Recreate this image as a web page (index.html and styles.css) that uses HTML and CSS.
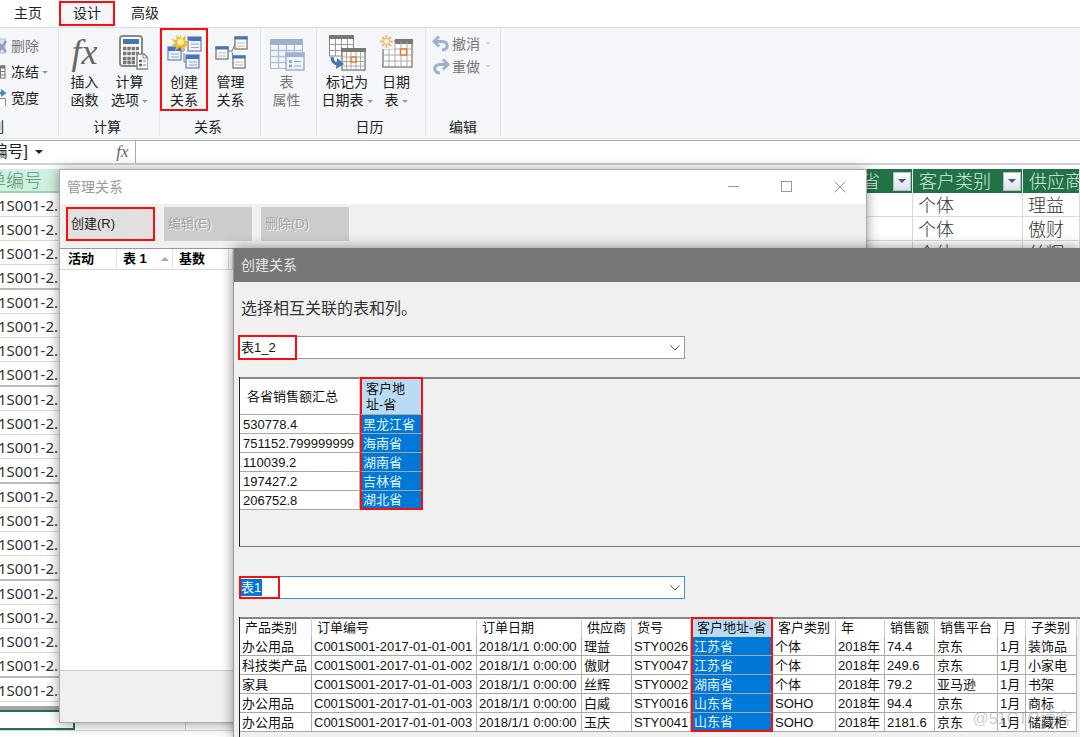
FILE: index.html
```html
<!DOCTYPE html>
<html lang="zh-CN">
<head>
<meta charset="utf-8">
<title>管理关系</title>
<link rel="stylesheet" href="styles.css">
</head>
<body>
<nav class="tabs">
  <button class="tab">主页</button>
  <button class="tab tab-active">设计</button>
  <button class="tab">高级</button>
</nav>

<section class="ribbon">
  <div class="group group-cols">
    <div class="small-list">
      <button class="small dim">
        <svg width="16" height="18" viewBox="0 0 16 18"><rect x="1" y="2" width="13" height="14" fill="#dfe6f2" stroke="#a9b9d6"/><path d="M6 4l9 11M15 4L7 16" stroke="#8b9dc3" stroke-width="2.4"/></svg>
        <span>删除</span></button>
      <button class="small">
        <svg width="16" height="18" viewBox="0 0 16 18"><rect x="1" y="3" width="13" height="12" fill="#fff" stroke="#777"/><path d="M1 4h13" stroke="#777" stroke-width="3"/><path d="M1 8.500h13M1 12h13M9.500 3v12" stroke="#777"/></svg>
        <span>冻结</span><i class="caret"></i></button>
      <button class="small">
        <svg width="16" height="18" viewBox="0 0 16 18"><path d="M1 17V9.500h13.500V17" fill="#fff" stroke="#888"/><path d="M5 4h6" stroke="#4a86be" stroke-width="2.400"/><path d="M10 0l5.500 4-5.500 4z" fill="#4a86be"/></svg>
        <span>宽度</span></button>
    </div>
    <div class="group-label">列</div>
  </div>

  <div class="group group-calc">
    <div class="buttons">
      <button class="big">
        <i class="fx-icon">fx</i>
        <span>插入<br>函数</span></button>
      <button class="big">
        <svg class="icon" width="36" height="38" viewBox="0 0 36 38"><rect x="8" y="3" width="22" height="30" rx="3" fill="#fff" stroke="#888" stroke-width="2"/><rect x="11" y="6" width="16" height="5" fill="#3f78b5"/><path d="M11 15.500h16M11 20.500h16M11 25.500h12M11 29.500h12" stroke="#777" stroke-width="3.500" stroke-dasharray="3.500 .8"/><path d="M25 21h7l4 4v11H25z" fill="#fff" stroke="#888" stroke-width="1.500"/><path d="M31 21v4h4" fill="none" stroke="#888"/><path d="M27 28h3M27 32h3" stroke="#666" stroke-width="2.400"/><path d="M31 28h3M31 32h3" stroke="#777"/></svg>
        <span>计算<br>选项<i class="caret"></i></span></button>
    </div>
    <div class="group-label">计算</div>
  </div>

  <div class="group group-rel">
    <div class="buttons">
      <button class="big marked">
        <svg class="icon" width="36" height="38" viewBox="0 0 36 38"><path d="M14 18h4V9h6M18 20v9h4" fill="none" stroke="#777"/><g fill="#eef3fc" stroke="#8496bf" stroke-width="1.500"><rect x="22" y="4" width="13" height="14"/><rect x="2" y="14" width="13" height="13"/><rect x="20" y="22" width="13" height="13"/></g><path d="M22 6h13M2 16h13M20 24h13" stroke="#4472c4" stroke-width="4"/><path d="M25 11h8M25 14.500h8M5 21h8M5 24h8M23 29h8M23 32h8" stroke="#92a8d8"/><path d="M14 1l2 5 4-4-1 6 6-1-5 3 4 4-6-1 0 5-4-4-5 4 1-5-5 0 4-3-4-4 6 1-1-5 4 3z" fill="#f3b92e"/><circle cx="14.500" cy="9" r="3.200" fill="#fff59d"/></svg>
        <span>创建<br>关系</span></button>
      <button class="big">
        <svg class="icon" width="36" height="38" viewBox="0 0 36 38"><path d="M15 18h4l4-9M19 19l3 10" fill="none" stroke="#777"/><g fill="#fff" stroke="#888" stroke-width="1.500"><rect x="22" y="4" width="12" height="12"/><rect x="3" y="14" width="12" height="12"/><rect x="20" y="23" width="12" height="12"/></g><path d="M21.500 5h13M2.500 15h13M19.500 24h13" stroke="#3f78b5" stroke-width="3"/><path d="M24 10h8M24 13h8M5 20h8M5 23h8M22 29h8M22 32h8" stroke="#b5b5b5"/></svg>
        <span>管理<br>关系</span></button>
    </div>
    <div class="group-label">关系</div>
  </div>

  <div class="group group-attr">
    <div class="buttons">
      <button class="big dim" disabled>
        <svg class="icon" width="36" height="38" viewBox="0 0 36 38"><rect x="1.500" y="7.500" width="32" height="28" fill="#f3f6fb" stroke="#a9b7d2"/><rect x="1" y="6" width="33" height="6" fill="#9db0d2"/><path d="M2 17.500h32M2 23.500h32M2 29.500h32M9.500 12v23M17.500 12v23M25.500 12v23" stroke="#b3c1dc" stroke-width="1.500"/><rect x="17" y="20" width="18" height="17" fill="#eef3fb" stroke="#9db0d2" stroke-width="1.500"/><path d="M17 22h18" stroke="#9db0d2" stroke-width="4"/><path d="M20 28.500h3M20 33h3" stroke="#8ea2c8" stroke-width="2.500"/><path d="M25 28.500h7M25 33h7" stroke="#8ea2c8"/></svg>
        <span>表<br>属性</span></button>
    </div>
  </div>

  <div class="group group-date">
    <div class="buttons">
      <button class="big wide">
        <svg class="icon" width="38" height="38" viewBox="0 0 38 38"><rect x="1.500" y="3" width="24" height="20" fill="#fff" stroke="#888"/><rect x="1" y="2" width="25" height="4" fill="#777"/><path d="M2 11.500h23M2 17.500h23M7.500 6v17M13.500 6v17M19.500 6v17" stroke="#999"/><rect x="14" y="16" width="23" height="21" fill="#fff" stroke="#888" stroke-width="1.500"/><rect x="13" y="15" width="25" height="4" fill="#777"/><path d="M14 24h23M14 28.500h23M14 33h23M18.500 19v18M23 19v18M28 19v18M32.500 19v18" stroke="#aaa"/><rect x="23" y="24" width="5" height="5" fill="#fff" stroke="#ed7d31" stroke-width="1.600"/><path d="M4 24c0 5 3 7 7 7" fill="none" stroke="#3f78b5" stroke-width="3"/><path d="M9 25l7 6-8 5z" fill="#3f78b5"/></svg>
        <span>标记为<br>日期表<i class="caret"></i></span></button>
      <button class="big narrow">
        <svg class="icon" width="36" height="38" viewBox="0 0 36 38"><rect x="5" y="8" width="29" height="26" fill="#fff" stroke="#888" stroke-width="1.500"/><rect x="17" y="6" width="18" height="5" fill="#777"/><path d="M5 16h29M5 22h29M5 28h29M11 9v24M17 9v24M23 9v24M29 9v24" stroke="#aaa"/><rect x="1" y="1" width="15" height="15" fill="#f4f6f9"/><rect x="22.500" y="16" width="6" height="6" fill="#fff" stroke="#ed7d31" stroke-width="1.600"/><path d="M8.500 2v13M2 8.500h13M4 4l9 9M13 4l-9 9" stroke="#e8bd72" stroke-width="1.800"/><circle cx="8.500" cy="8.500" r="3" fill="#fff4d0" stroke="#e8bd72"/></svg>
        <span>日期<br>表<i class="caret"></i></span></button>
    </div>
    <div class="group-label">日历</div>
  </div>

  <div class="group group-edit">
    <div class="small-list undo-list">
      <button class="small dim" disabled>
        <svg width="18" height="18" viewBox="0 0 18 18"><path d="M3 6.500h7c7 .5 7 8 0 8.500" fill="none" stroke="#9db0d0" stroke-width="3"/><path d="M7 1.500L2 6.500l5 5" fill="none" stroke="#9db0d0" stroke-width="3"/></svg>
        <span>撤消</span><i class="caret faint"></i></button>
      <button class="small dim" disabled>
        <svg width="18" height="18" viewBox="0 0 18 18"><path d="M15 6.500H8c-7 .5-7 8 0 8.500" fill="none" stroke="#9db0d0" stroke-width="3"/><path d="M11 1.500l5 5-5 5" fill="none" stroke="#9db0d0" stroke-width="3"/></svg>
        <span>重做</span><i class="caret faint"></i></button>
    </div>
    <div class="group-label">编辑</div>
  </div>
</section>

<section class="formula">
  <button class="name-box"><span class="clip">[订单编号]</span><i class="caret black"></i></button>
  <button class="fx"><i>fx</i></button>
  <input class="formula-input" type="text" aria-label="编辑栏">
</section>

<main class="sheet">
  <table class="cells">
    <thead><tr>
      <th class="key"><div class="clip">订单编号</div></th><th></th><th></th>
      <th><div class="head"><span>省</span><button class="filter" aria-label="筛选"></button></div></th>
      <th><div class="head"><span>客户类别</span><button class="filter" aria-label="筛选"></button></div></th>
      <th><div class="head"><span>供应商</span></div></th>
    </tr></thead>
    <tbody>
      <tr><td><div class="clip">C001S001-2.</div></td><td></td><td></td><td></td><td>个体</td><td>理益</td></tr>
      <tr><td><div class="clip">C001S001-2.</div></td><td></td><td></td><td></td><td>个体</td><td>傲财</td></tr>
      <tr><td><div class="clip">C001S001-2.</div></td><td></td><td></td><td></td><td>个体</td><td>丝辉</td></tr>
      <tr><td><div class="clip">C001S001-2.</div></td><td></td><td></td><td></td><td></td><td></td></tr>
      <tr><td><div class="clip">C001S001-2.</div></td><td></td><td></td><td></td><td></td><td></td></tr>
      <tr><td><div class="clip">C001S001-2.</div></td><td></td><td></td><td></td><td></td><td></td></tr>
      <tr><td><div class="clip">C001S001-2.</div></td><td></td><td></td><td></td><td></td><td></td></tr>
      <tr><td><div class="clip">C001S001-2.</div></td><td></td><td></td><td></td><td></td><td></td></tr>
      <tr><td><div class="clip">C001S001-2.</div></td><td></td><td></td><td></td><td></td><td></td></tr>
      <tr><td><div class="clip">C001S001-2.</div></td><td></td><td></td><td></td><td></td><td></td></tr>
      <tr><td><div class="clip">C001S001-2.</div></td><td></td><td></td><td></td><td></td><td></td></tr>
      <tr><td><div class="clip">C001S001-2.</div></td><td></td><td></td><td></td><td></td><td></td></tr>
      <tr><td><div class="clip">C001S001-2.</div></td><td></td><td></td><td></td><td></td><td></td></tr>
      <tr><td><div class="clip">C001S001-2.</div></td><td></td><td></td><td></td><td></td><td></td></tr>
      <tr><td><div class="clip">C001S001-2.</div></td><td></td><td></td><td></td><td></td><td></td></tr>
      <tr><td><div class="clip">C001S001-2.</div></td><td></td><td></td><td></td><td></td><td></td></tr>
      <tr><td><div class="clip">C001S001-2.</div></td><td></td><td></td><td></td><td></td><td></td></tr>
      <tr><td><div class="clip">C001S001-2.</div></td><td></td><td></td><td></td><td></td><td></td></tr>
      <tr><td><div class="clip">C001S001-2.</div></td><td></td><td></td><td></td><td></td><td></td></tr>
      <tr><td><div class="clip">C001S001-2.</div></td><td></td><td></td><td></td><td></td><td></td></tr>
      <tr><td><div class="clip">C001S001-2.</div></td><td></td><td></td><td></td><td></td><td></td></tr>
    </tbody>
  </table>
  <div class="pane-split"></div>
  <div class="measures"><div class="measure selected"></div><div class="measure"></div><div class="measure rest"></div></div>
</main>

<section class="window manage">
  <header class="manage-title">
    <span>管理关系</span>
    <div class="controls">
      <button aria-label="最小化"><svg width="12" height="12" viewBox="0 0 12 12"><path d="M0 5.500h11" stroke="#999"/></svg></button>
      <button aria-label="最大化"><svg width="12" height="12" viewBox="0 0 12 12"><rect x=".5" y=".5" width="10" height="10" fill="none" stroke="#999"/></svg></button>
      <button aria-label="关闭"><svg width="12" height="12" viewBox="0 0 12 12"><path d="M.5 .5l11 11M11.500 .5l-11 11" stroke="#999"/></svg></button>
    </div>
  </header>
  <div class="toolbar">
    <button class="tool tool-marked">创建(R)</button>
    <button class="tool" disabled>编辑(E)</button>
    <button class="tool" disabled>删除(D)</button>
  </div>
  <div class="list">
    <table class="list-head"><tr><th>活动</th><th><div class="sorted">表 1<i class="sort"></i></div></th><th>基数</th><th></th></tr></table>
  </div>
  <footer class="manage-foot"></footer>
</section>

<section class="window create">
  <header class="create-title">创建关系</header>
  <div class="create-body">
    <p class="lead">选择相互关联的表和列。</p>
    <div class="combo">
      <select aria-label="表"><option>表1_2</option></select>
      <svg class="chevron" width="10" height="6" viewBox="0 0 10 6"><path d="M.5 .5L5 5l4.500-4.500" fill="none" stroke="#555"/></svg>
      <span class="mark"></span>
    </div>
    <div class="grid grid-top">
      <table class="data data-a">
        <thead><tr><th>各省销售额汇总</th><th class="pick">客户地<br>址-省</th></tr></thead>
        <tbody>
          <tr><td>530778.4</td><td class="pick">黑龙江省</td></tr>
          <tr><td>751152.799999999</td><td class="pick">海南省</td></tr>
          <tr><td>110039.2</td><td class="pick">湖南省</td></tr>
          <tr><td>197427.2</td><td class="pick">吉林省</td></tr>
          <tr><td>206752.8</td><td class="pick">湖北省</td></tr>
        </tbody>
      </table>
    </div>
    <div class="combo combo-focus">
      <select aria-label="相关表"><option>表1</option></select>
      <svg class="chevron" width="10" height="6" viewBox="0 0 10 6"><path d="M.5 .5L5 5l4.500-4.500" fill="none" stroke="#555"/></svg>
      <span class="mark mark-short"></span>
    </div>
    <div class="grid grid-bottom">
      <table class="data data-b">
        <thead><tr><th>产品类别</th><th>订单编号</th><th>订单日期</th><th>供应商</th><th>货号</th><th class="pick">客户地址-省</th><th>客户类别</th><th>年</th><th>销售额</th><th>销售平台</th><th>月</th><th>子类别</th></tr></thead>
        <tbody>
          <tr><td>办公用品</td><td>C001S001-2017-01-01-001</td><td>2018/1/1 0:00:00</td><td>理益</td><td>STY0026</td><td class="pick">江苏省</td><td>个体</td><td>2018年</td><td>74.4</td><td>京东</td><td>1月</td><td>装饰品</td></tr>
          <tr><td>科技类产品</td><td>C001S001-2017-01-01-002</td><td>2018/1/1 0:00:00</td><td>傲财</td><td>STY0047</td><td class="pick">江苏省</td><td>个体</td><td>2018年</td><td>249.6</td><td>京东</td><td>1月</td><td>小家电</td></tr>
          <tr><td>家具</td><td>C001S001-2017-01-01-003</td><td>2018/1/1 0:00:00</td><td>丝辉</td><td>STY0002</td><td class="pick">湖南省</td><td>个体</td><td>2018年</td><td>79.2</td><td>亚马逊</td><td>1月</td><td>书架</td></tr>
          <tr><td>办公用品</td><td>C001S001-2017-01-01-003</td><td>2018/1/1 0:00:00</td><td>白威</td><td>STY0016</td><td class="pick">山东省</td><td>SOHO</td><td>2018年</td><td>94.4</td><td>京东</td><td>1月</td><td>商标</td></tr>
          <tr><td>办公用品</td><td>C001S001-2017-01-01-003</td><td>2018/1/1 0:00:00</td><td>玉庆</td><td>STY0041</td><td class="pick">山东省</td><td>SOHO</td><td>2018年</td><td>2181.6</td><td>京东</td><td>1月</td><td>储藏柜</td></tr>
        </tbody>
      </table>
    </div>
  </div>
</section>
<div class="watermark">@51CTO博客</div>
</body>
</html>
```
FILE: styles.css
```css
* { box-sizing: border-box; }
body {
  margin: 0;
  height: 100vh;
  overflow: hidden;
  position: relative;
  display: flex;
  flex-direction: column;
  background: #fff;
  color: #222;
  font: 14px/18px "Liberation Sans", "Noto Sans CJK SC", sans-serif;
}
button, input, select { font: inherit; color: inherit; margin: 0; padding: 0; border: 0; background: none; border-radius: 0; }
table { border-collapse: separate; border-spacing: 0; table-layout: fixed; }
th, td { padding: 0; text-align: left; font-weight: 400; }

/* tabs */
.tabs { display: flex; height: 28px; flex: none; border-bottom: 1px solid #d9dce0; padding: 1px 0; gap: 2px; }
.tab { width: 56px; height: 25px; padding-bottom: 1px; }
.tab-active { background: #f4f6f9; border: 2px solid #fb0d0d; margin-left: 1px; }

/* ribbon */
.ribbon { display: flex; flex: none; height: 111px; background: #f4f6f9; border-bottom: 1px solid #dfe2e6; }
.group { display: flex; flex-direction: column; justify-content: space-between; height: 108px; border-right: 1px solid #e0e3e7; overflow: hidden; }
.group-cols { width: 59px; }
.group-calc, .group-rel { width: 101px; }
.group-attr { width: 56px; }
.group-date { width: 109px; }
.group-edit { width: 75px; }
.group-label { text-align: center; line-height: 18px; }
.group-cols .group-label { text-align: left; margin-left: -10px; }
.group-calc .group-label, .group-rel .group-label { padding-right: 4px; }
.group-date .group-label { padding-right: 3px; }
.buttons { display: flex; }
.group-calc .buttons { padding-left: 3px; }
.group-attr .buttons { justify-content: center; padding-right: 4px; }
.big { width: 45px; height: 83px; display: flex; flex-direction: column; align-items: center; justify-content: flex-end; white-space: nowrap; line-height: 18px; padding-bottom: 2px; }
.big.marked { width: 48px; border: 2px solid #fb0d0d; padding-bottom: 0; }
.big.wide { width: 60px; }
.big.narrow { width: 38px; }
.big span { margin-top: 2px; }
.icon { display: block; flex: none; }
.fx-icon { font: italic 36px/38px "Liberation Serif", serif; color: #666; }
.dim { color: #777; }
.caret { display: inline-block; border: 3px solid transparent; border-top-color: #999; border-bottom-width: 0; margin-left: 3px; vertical-align: middle; }
.caret.faint { border-top-color: #d5d7da; }
.caret.black { border-width: 4px 4px 0; border-top-color: #222; }
.small-list { display: flex; flex-direction: column; padding-top: 5px; }
.small { display: flex; align-items: center; height: 26px; }
.group-cols .small svg { margin-left: -9px; margin-right: 4px; flex: none; }
.undo-list { padding: 4px 0 0 6px; }
.undo-list .small { height: 23px; gap: 2px; }

/* formula bar */
.formula { display: flex; flex: none; height: 25px; margin-top: 1px; border-top: 1px solid #aaa; border-bottom: 2px solid #d0d0d0; }
.clip { display: flex; justify-content: flex-end; overflow: hidden; white-space: nowrap; }
.name-box { display: flex; align-items: center; width: 110px; font-size: 16px; }
.name-box .clip { width: 28px; }
.name-box .caret { margin-left: 7px; }
.fx { width: 26px; text-align: center; font: 17px "Liberation Serif", serif; color: #666; border-right: 1px solid #aaa; }
.formula-input { flex: 1; min-width: 0; }

/* sheet */
.sheet { flex: 1; display: flex; flex-direction: column; min-height: 0; overflow: hidden; padding-top: 4px; color: #333; }
.cells { width: 100%; flex: none; font: 18px/22px "Noto Sans", "Noto Sans CJK SC", sans-serif; }
.cells th { height: 24px; background: #217346; color: #dcebe2; font-weight: 300; }
.cells th:nth-child(1), .measure { width: 75px; }
.cells th:nth-child(2) { width: 110px; }
.cells th:nth-child(4) { width: 68px; }
.cells th:nth-child(5) { width: 110px; }
.cells th:nth-child(6) { width: 57px; }
.cells th.key { background: #d2efdf; color: #4f9a72; border-bottom: 2px solid #9ad3b4; }
.cells .key .clip { width: 42px; }
.cells td { height: 24px; line-height: 22px; padding-left: 5px; border-right: 1px solid #d9d9d9; border-bottom: 1px solid #d9d9d9; font-weight: 300; white-space: nowrap; }
.cells td:first-child { padding: 0; font-size: 15px; font-weight: 400; }
.cells td .clip { width: 58px; }
.cells tr:nth-child(4n) td { height: 25px; border-bottom: 2px solid #bbb; }
.cells th:nth-child(n+4) { border-right: 1px solid #e6efe9; }
.head { display: flex; align-items: center; justify-content: space-between; padding: 0 1px 0 6px; white-space: nowrap; overflow: hidden; }
.cells th:nth-child(4) .head { padding-left: 17px; }
.filter { width: 18px; height: 19px; flex: none; background: linear-gradient(#fff, #dcdfe6); border: 1px solid #b4bccb; display: flex; align-items: center; justify-content: center; }
.filter::after { content: ""; border: 4px solid transparent; border-top-color: #46539b; border-bottom-width: 0; }
.pane-split { flex: none; height: 4px; margin-top: 4px; background: #a6a6a6; }
.measures { display: flex; flex: none; height: 21px; border-bottom: 1px solid #d9d9d9; }
.measure { border-right: 1px solid #d9d9d9; }
.measure + .measure { width: 111px; }
.measures .rest { flex: 1; }
.measure.selected { border: 2px solid #217346; border-left: 0; }

/* windows */
.window { position: absolute; display: flex; flex-direction: column; }
.manage { left: 59px; right: 213px; top: 169px; bottom: 14px; background: #f0f0f0; border: 1px solid #aaa; box-shadow: 0 1px 12px rgba(0, 0, 0, .4); }
.manage-title { flex: none; display: flex; justify-content: space-between; align-items: center; height: 34px; padding: 0 20px 0 7px; background: #fff; color: #999; }
.controls { display: flex; gap: 41px; }
.controls button, .controls svg { display: block; }
.toolbar { flex: none; display: flex; gap: 9px; height: 44px; padding: 3px 6px; }
.tool { width: 88px; height: 34px; padding-left: 4px; text-align: left; background: #ccc; font-size: 13px; }
.tool:disabled { color: #a3a3a3; text-shadow: 1px 1px #f5f5f5; }
.tool-marked { width: 89px; padding-left: 3px; background: #e1e1e1; border: 2px solid #fb0d0d; }
.list { flex: 1; background: #fff; border-top: 1px solid #999; border-bottom: 1px solid #ccccd2; }
.list-head { width: 173px; font-size: 13px; line-height: 20px; color: #000; }
.list-head th { height: 21px; padding-left: 6px; font-weight: 700; border-right: 1px solid #e2e2e2; border-bottom: 1px solid #d8d8d8; }
.list-head th:nth-child(1) { width: 57px; padding-left: 8px; }
.list-head th:nth-child(2) { width: 56px; }
.list-head th:nth-child(4) { width: 4px; padding: 0; }
.sorted { display: flex; align-items: center; justify-content: space-between; padding-right: 3px; }
.sort { border: 4px solid transparent; border-bottom-color: #aaa; border-top-width: 0; }
.manage-foot { flex: none; height: 51px; }

.create { left: 233px; right: 0; top: 248px; bottom: 0; background: #f0f0f0; border-left: 1px solid #999; box-shadow: 0 0 12px rgba(0, 0, 0, .45); overflow: hidden; }
.create-title { flex: none; height: 34px; padding-left: 7px; line-height: 35px; background: #767676; color: #e8e8e8; }
.create-body { padding: 17px 0 0 5px; }
.lead { margin: 0 0 17px; padding-left: 2px; font-size: 16px; line-height: 20px; color: #333; }
.combo { position: relative; width: 446px; height: 23px; }
.combo select { display: block; width: 100%; height: 23px; padding-left: 1px; appearance: none; background: #fff; border: 1px solid #9a9a9a; font-size: 13px; color: #111; }
.combo-focus select { border-color: #3c93dd; color: #fff; background: linear-gradient(#0078d7, #0078d7) 1px 2px / 21px 17px no-repeat #fff; }
.chevron { position: absolute; right: 5px; top: 9px; pointer-events: none; }
.mark { position: absolute; left: -1px; top: -1px; width: 59px; height: 25px; border: 2px solid #fb0d0d; pointer-events: none; }
.mark-short { left: 0; width: 41px; top: 0; height: 23px; }
.grid { border-left: 1px solid #222; background: linear-gradient(#858585, #858585) 0 0 / 100% 2px no-repeat; overflow: hidden; }
.grid-top { height: 170px; margin: 18px 0 29px; border-bottom: 1px solid #777; }
.grid-bottom { height: 200px; margin-top: 18px; }
.data { font-size: 13px; line-height: 16px; color: #111; }
.data th, .data td { background: #fff; border-right: 1px solid #ccc; white-space: nowrap; overflow: hidden; }
.data td { height: 19px; padding: 0 0 0 3px; line-height: 17px; border-right-color: #b0b0b0; border-bottom: 1px solid #a8a8a8; }
.data th { padding: 0 0 0 6px; border-top: 2px solid #858585; }
.data-a { width: 183px; }
.data-a th { height: 38px; border-bottom: 1px solid #a8a8a8; }
.data-a th:first-child { width: 120px; padding-left: 7px; }
.data-b { width: 837px; }
.data-b th { height: 20px; padding-left: 5px; }
.data-b th:nth-child(1) { width: 72px; }
.data-b th:nth-child(2) { width: 165px; }
.data-b th:nth-child(3) { width: 105px; }
.data-b th:nth-child(4) { width: 50px; }
.data-b th:nth-child(5) { width: 59px; }
.data-b th:nth-child(6) { width: 82px; }
.data-b th:nth-child(7) { width: 63px; }
.data-b th:nth-child(8) { width: 49px; }
.data-b th:nth-child(9) { width: 50px; }
.data-b th:nth-child(10) { width: 63px; }
.data-b th:nth-child(11) { width: 28px; }
.data-b th:nth-child(12) { width: 51px; }
.data-b td { padding-left: 2px; }
.data .pick { border-left: 2px solid #fb0d0d; border-right: 2px solid #fb0d0d; }
.data th.pick { background: #b9dbf3; padding-left: 4px; border-top-color: #fb0d0d; }
.data td.pick { background: #0078d7; color: #e6f3ff; padding-left: 1px; }
.data tr:last-child td.pick { border-bottom: 2px solid #fb0d0d; }

.watermark { position: absolute; right: 8px; bottom: 8px; font-size: 16px; line-height: 20px; color: rgba(120, 120, 120, .4); }
```
